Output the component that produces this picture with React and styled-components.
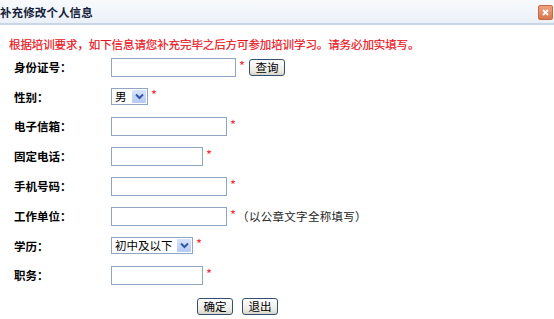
import React from 'react'
import styled, { createGlobalStyle } from 'styled-components'

const GlobalStyle = createGlobalStyle`
  body {
    margin: 0;
    background: #fff;
    font-family: "Noto Sans CJK SC", "Liberation Sans", sans-serif;
    font-size: 11.5px;
    color: #000;
  }
`

const Page = styled.div`
  width: 554px;
  height: 319px;
  overflow: hidden;
  background: #fff;
`

const Header = styled.div`
  height: 23px;
  display: flex;
  align-items: center;
  justify-content: space-between;
  padding: 0 1px 0 0;
  background: linear-gradient(#f8fafd, #ebf0f8);
  border-bottom: 2px solid #c9d6e8;
`

const Title = styled.span`
  font-weight: bold;
  font-size: 11.5px;
  color: #15223a;
  letter-spacing: 0.1px;
`

const CloseBtn = styled.span`
  width: 13px;
  height: 13px;
  border-radius: 2px;
  background: linear-gradient(#f0a47e, #d9764d);
  border: 1px solid #c9683f;
  display: flex;
  align-items: center;
  justify-content: center;
  margin-top: 2px;
`

const Notice = styled.div`
  padding: 11px 0 0 9px;
  line-height: 16px;
  color: #e8141c;
  letter-spacing: -0.1px;
  -webkit-text-stroke: 0.2px #e8141c;
`

const Form = styled.div`
  padding-left: 14px;
`

const Row = styled.div`
  display: flex;
  align-items: center;
  height: ${p => p.$h || 30}px;
`

const Label = styled.span`
  width: 97px;
  font-weight: bold;
`

const Input = styled.input`
  box-sizing: border-box;
  width: ${p => p.$w}px;
  height: 19px;
  border: 1px solid #8fa6c2;
  background: #fff;
  padding: 0 2px;
  margin: 0;
  outline: none;
`

const Star = styled.span`
  color: #f0303a;
  font-size: 13px;
  line-height: 13px;
  margin: -4px 0 0 3px;
`

const Select = styled.div`
  box-sizing: border-box;
  width: ${p => p.$w}px;
  height: 17px;
  border: 1px solid #8fa6c2;
  background: #fff;
  display: flex;
  align-items: center;
  justify-content: space-between;
  padding: 0 1px 0 3px;
  line-height: 15px;
`

const Arrow = styled.span`
  width: 14px;
  height: 13px;
  background: linear-gradient(#d8e4fd, #b5c9f5);
  border-radius: 1px;
  display: flex;
  align-items: center;
  justify-content: center;
`

const Hint = styled.span`
  margin-left: 1px;
  color: #1d1d1d;
  letter-spacing: 0.3px;
`

const Button = styled.button`
  box-sizing: border-box;
  height: 17px;
  width: ${p => p.$w || 36}px;
  padding: 0;
  margin: 0;
  font-family: inherit;
  font-size: 11.5px;
  line-height: 13px;
  color: #000;
  border: 1px solid #34506e;
  border-radius: 3px;
  background: linear-gradient(#ffffff, #ecebe4 70%, #d8d6cc);
`

const QueryButton = styled(Button)`
  margin-left: 4px;
`

const Buttons = styled.div`
  display: flex;
  gap: 9px;
  padding: 8px 0 0 197px;
`

const Chevron = () => (
  <svg width="9" height="7" viewBox="0 0 9 7">
    <path d="M1 1.5 L4.5 5 L8 1.5" fill="none" stroke="#3157a8" strokeWidth="2" />
  </svg>
)

const FakeSelect = ({ value, w }) => (
  <Select $w={w}>
    <span>{value}</span>
    <Arrow>
      <Chevron />
    </Arrow>
  </Select>
)

export default function App() {
  return (
    <Page>
      <GlobalStyle />
      <Header>
        <Title>补充修改个人信息</Title>
        <CloseBtn>
          <svg width="7" height="7" viewBox="0 0 7 7">
            <path d="M1 1 L6 6 M6 1 L1 6" stroke="#fff" strokeWidth="1.8" />
          </svg>
        </CloseBtn>
      </Header>
      <Notice>根据培训要求，如下信息请您补充完毕之后方可参加培训学习。请务必加实填写。</Notice>
      <Form>
        <Row>
          <Label>身份证号：</Label>
          <Input $w={125} />
          <Star>*</Star>
          <QueryButton>查询</QueryButton>
        </Row>
        <Row $h={29}>
          <Label>性别：</Label>
          <FakeSelect value="男" w={37} />
          <Star>*</Star>
        </Row>
        <Row>
          <Label>电子信箱：</Label>
          <Input $w={116} />
          <Star>*</Star>
        </Row>
        <Row>
          <Label>固定电话：</Label>
          <Input $w={92} />
          <Star>*</Star>
        </Row>
        <Row>
          <Label>手机号码：</Label>
          <Input $w={116} />
          <Star>*</Star>
        </Row>
        <Row>
          <Label>工作单位：</Label>
          <Input $w={116} />
          <Star>*</Star>
          <Hint>（以公章文字全称填写）</Hint>
        </Row>
        <Row $h={29}>
          <Label>学历：</Label>
          <FakeSelect value="初中及以下" w={82} />
          <Star>*</Star>
        </Row>
        <Row>
          <Label>职务：</Label>
          <Input $w={92} />
          <Star>*</Star>
        </Row>
      </Form>
      <Buttons>
        <Button>确定</Button>
        <Button>退出</Button>
      </Buttons>
    </Page>
  )
}
